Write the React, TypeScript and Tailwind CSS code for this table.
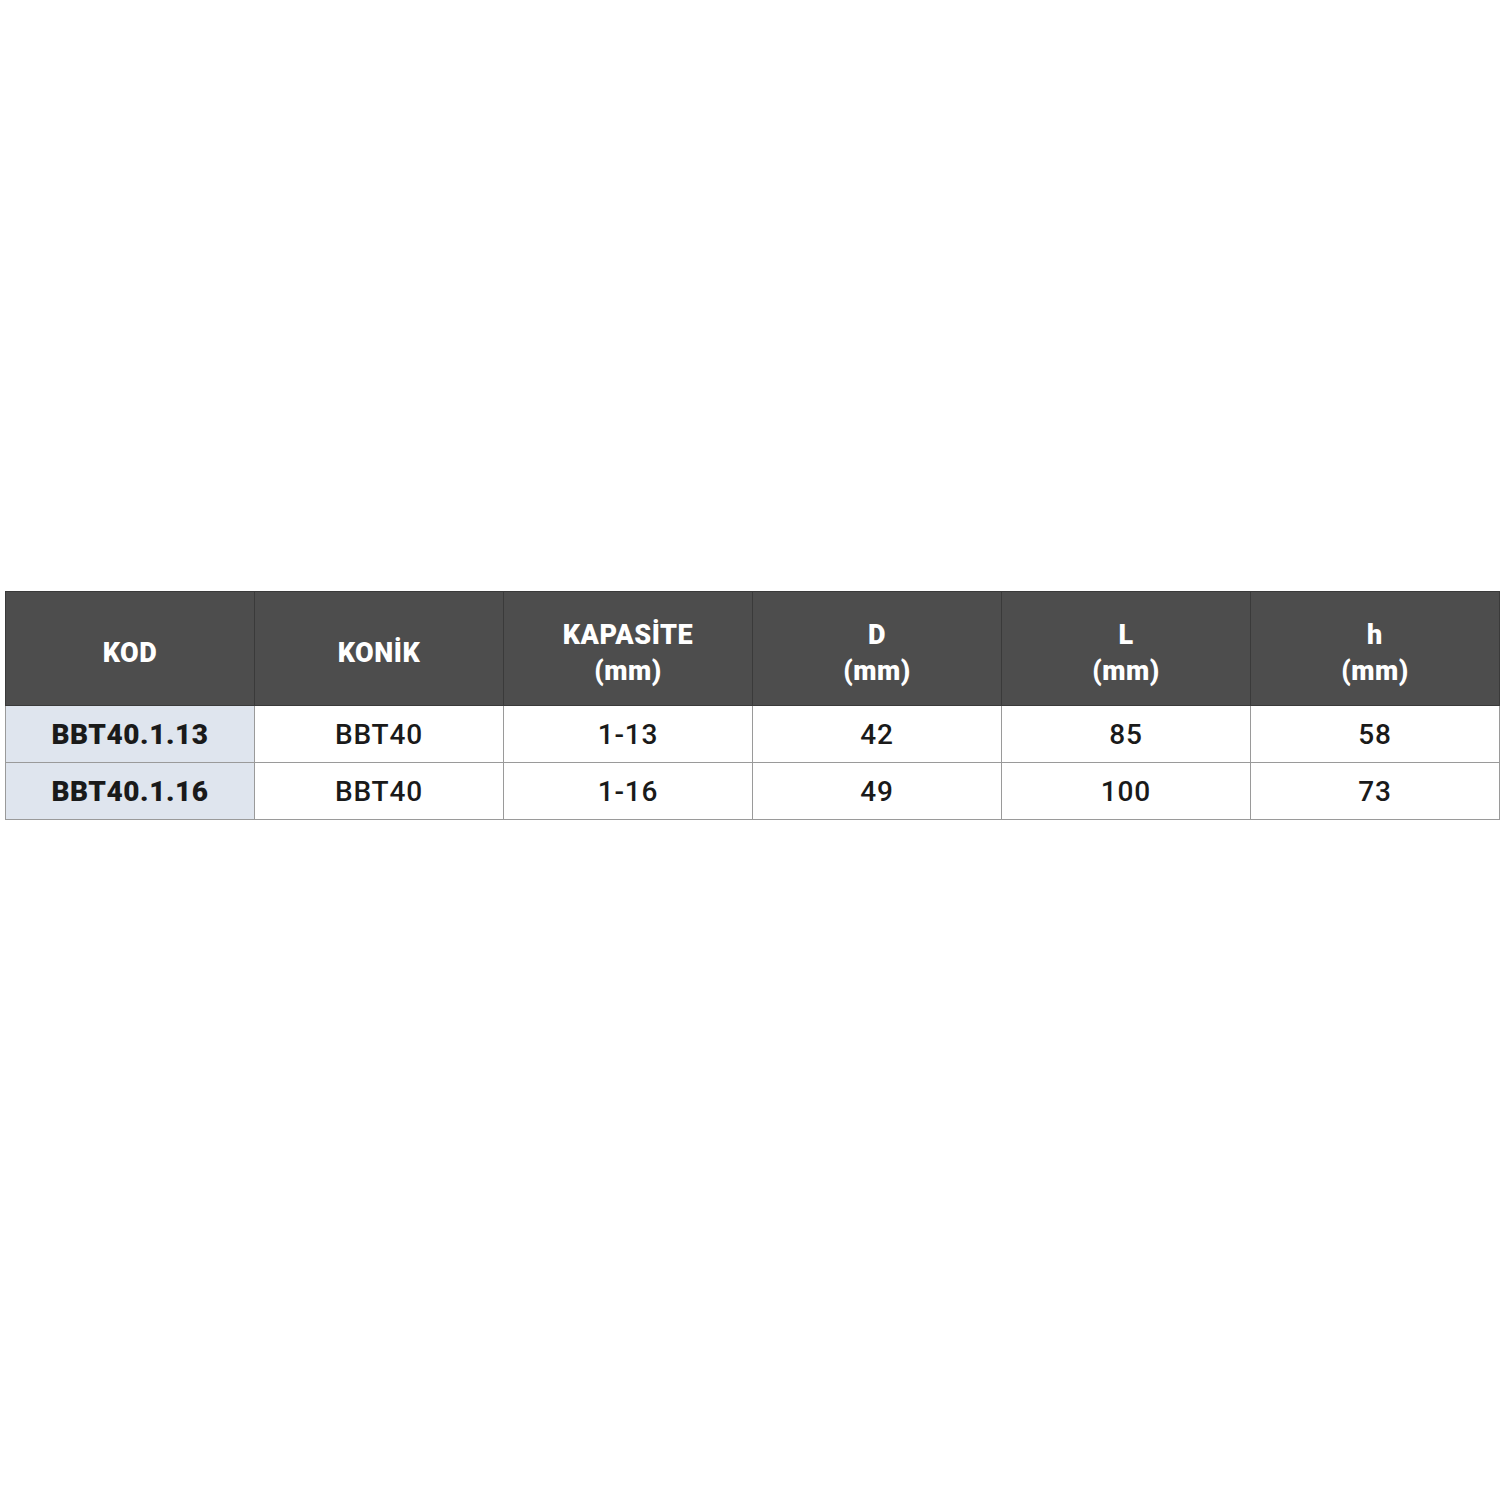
const headers: [string, string?][] = [
  ['KOD'],
  ['KONİK'],
  ['KAPASİTE', '(mm)'],
  ['D', '(mm)'],
  ['L', '(mm)'],
  ['h', '(mm)'],
];

const rows = [
  ['BBT40.1.13', 'BBT40', '1-13', '42', '85', '58'],
  ['BBT40.1.16', 'BBT40', '1-16', '49', '100', '73'],
];

export default function App() {
  return (
    <div className="min-h-[1500px] bg-white pt-[591px] pl-[5px] font-['Roboto',sans-serif]">
      <table className="w-[1495px] table-fixed border-collapse">
        <thead>
          <tr className="h-[114px] bg-[#4d4d4d]">
            {headers.map(([a, b]) => (
              <th
                key={a}
                className="border border-[#3a3a3a] pt-[8px] text-center align-middle text-[27px] font-black leading-[36px] tracking-[0.02em] text-white"
              >
                <div>{a}</div>
                {b && <div>{b}</div>}
              </th>
            ))}
          </tr>
        </thead>
        <tbody>
          {rows.map((r) => (
            <tr key={r[0]} className="h-[57px]">
              {r.map((c, i) => (
                <td
                  key={i}
                  className={
                    i === 0
                      ? 'border border-[#9a9a9a] bg-[#dfe5ee] pt-[2px] text-center text-[28px] font-black tracking-[0.02em] text-[#1a1a1a]'
                      : 'border border-[#9a9a9a] bg-white pt-[2px] text-center text-[28px] font-medium tracking-[0.03em] text-[#1a1a1a]'
                  }
                >
                  {c}
                </td>
              ))}
            </tr>
          ))}
        </tbody>
      </table>
    </div>
  );
}
